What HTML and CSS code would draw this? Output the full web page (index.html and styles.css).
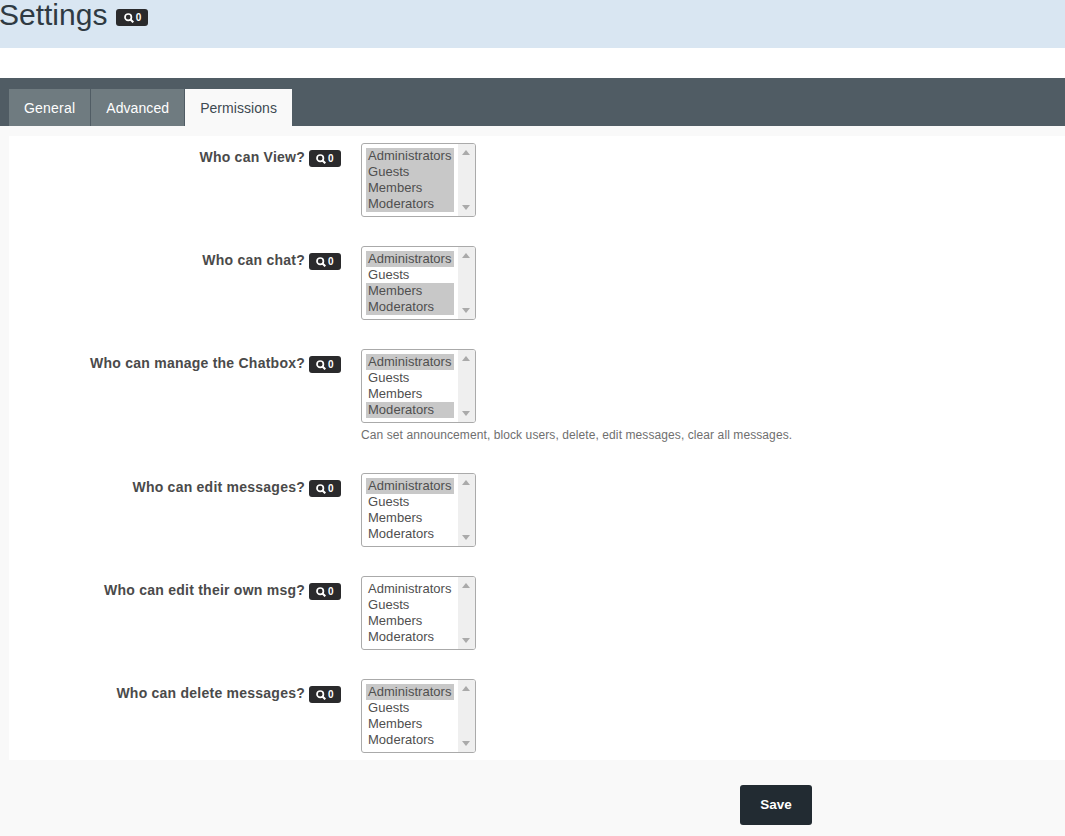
FILE: index.html
```html
<!DOCTYPE html>
<html lang="en">
<head>
<meta charset="utf-8">
<title>Settings</title>
<link rel="stylesheet" href="styles.css">
</head>
<body>
<svg class="defs" width="0" height="0" aria-hidden="true"><symbol id="mag" viewBox="0 0 10 10"><circle cx="4.2" cy="4.2" r="3.2" fill="none" stroke="currentColor" stroke-width="1.7"/><path d="M6.5 6.5 9.3 9.3" stroke="currentColor" stroke-width="2.1" fill="none"/></symbol></svg>
<header class="page-head">
  <h1 class="title">Settings</h1>
  <span class="badge badge-head"><svg class="mag"><use href="#mag"/></svg>0</span>
</header>
<nav class="tabbar">
  <a class="tab">General</a>
  <a class="tab tab-tight">Advanced</a>
  <a class="tab active">Permissions</a>
</nav>
<main class="content">
  <section class="panel">
    <div class="row">
      <div class="label"><span>Who can View?</span><span class="badge"><svg class="mag"><use href="#mag"/></svg>0</span></div>
      <div class="field"><div class="list"><ul class="opts"><li class="sel">Administrators</li><li class="sel">Guests</li><li class="sel">Members</li><li class="sel">Moderators</li></ul><div class="sb"><i class="up"></i><i class="down"></i></div></div></div>
    </div>
    <div class="row">
      <div class="label"><span>Who can chat?</span><span class="badge"><svg class="mag"><use href="#mag"/></svg>0</span></div>
      <div class="field"><div class="list"><ul class="opts"><li class="sel">Administrators</li><li>Guests</li><li class="sel">Members</li><li class="sel">Moderators</li></ul><div class="sb"><i class="up"></i><i class="down"></i></div></div></div>
    </div>
    <div class="row">
      <div class="label"><span>Who can manage the Chatbox?</span><span class="badge"><svg class="mag"><use href="#mag"/></svg>0</span></div>
      <div class="field"><div class="list"><ul class="opts"><li class="sel">Administrators</li><li>Guests</li><li>Members</li><li class="sel">Moderators</li></ul><div class="sb"><i class="up"></i><i class="down"></i></div></div>
      <p class="help">Can set announcement, block users, delete, edit messages, clear all messages.</p></div>
    </div>
    <div class="row">
      <div class="label"><span>Who can edit messages?</span><span class="badge"><svg class="mag"><use href="#mag"/></svg>0</span></div>
      <div class="field"><div class="list"><ul class="opts"><li class="sel">Administrators</li><li>Guests</li><li>Members</li><li>Moderators</li></ul><div class="sb"><i class="up"></i><i class="down"></i></div></div></div>
    </div>
    <div class="row">
      <div class="label"><span>Who can edit their own msg?</span><span class="badge"><svg class="mag"><use href="#mag"/></svg>0</span></div>
      <div class="field"><div class="list"><ul class="opts"><li>Administrators</li><li>Guests</li><li>Members</li><li>Moderators</li></ul><div class="sb"><i class="up"></i><i class="down"></i></div></div></div>
    </div>
    <div class="row">
      <div class="label"><span>Who can delete messages?</span><span class="badge"><svg class="mag"><use href="#mag"/></svg>0</span></div>
      <div class="field"><div class="list"><ul class="opts"><li class="sel">Administrators</li><li>Guests</li><li>Members</li><li>Moderators</li></ul><div class="sb"><i class="up"></i><i class="down"></i></div></div></div>
    </div>
  </section>
  <div class="actions"><button class="save" type="button">Save</button></div>
</main>
</body>
</html>
```
FILE: styles.css
```css
* { box-sizing: border-box; }
html, body { margin: 0; padding: 0; }
body { width: 1065px; height: 836px; overflow: hidden; background: #f9f9f9; font-family: "Liberation Sans", Arial, sans-serif; color: #4a4a4a; }
.defs { display: block; height: 0; }
.page-head { height: 48px; background: #d9e6f2; display: flex; align-items: flex-start; }
.title { margin: 0 0 0 -1px; font-size: 30px; font-weight: 400; line-height: 30px; color: #2f3a42; }
.badge { display: inline-flex; align-items: center; justify-content: center; gap: 2px; width: 32px; height: 17px; border-radius: 3px; background: #2a2a2c; color: #fff; font-size: 10px; font-weight: 700; line-height: 1; }
.badge-head { margin: 9px 0 0 9px; }
.mag { width: 10px; height: 10px; }
.tabbar { border-top: 30px solid #fff; height: 78px; background: #505c64; display: flex; align-items: flex-end; gap: 1px; padding-left: 9px; }
.tab { height: 37px; padding: 0 15px; display: flex; align-items: center; background: #6f7b80; color: #fff; font-size: 14px; letter-spacing: .2px; }
.tab-tight { letter-spacing: .08px; }
.tab.active { background: #f9f9f9; color: #3e4a52; letter-spacing: .05px; }
.content { padding-top: 10px; }
.panel { margin-left: 9px; background: #fff; padding: 7px 0 7px; display: flex; flex-direction: column; gap: 29px; }
.row { display: flex; align-items: flex-start; }
.label { width: 332px; display: flex; justify-content: flex-end; align-items: flex-start; gap: 4px; padding-top: 7px; font-size: 14px; font-weight: 700; letter-spacing: .24px; color: #4a4a4a; }
.label > span:first-child { line-height: 15px; }
.field { margin-left: 20px; }
.list { width: 115px; height: 74px; border: 1px solid #aaa; border-radius: 3px; background: #fff; display: flex; overflow: hidden; }
.opts { list-style: none; margin: 0; padding: 4px 0 0 4px; width: 96px; flex: none; font-size: 13px; letter-spacing: .03px; line-height: 15px; color: #4f4f4f; }
.opts li { width: 88px; height: 16px; padding-left: 2px; white-space: nowrap; }
.opts li.sel { background: #c8c8c8; }
.sb { position: relative; flex: 1; background: #efefef; }
.sb i { position: absolute; left: 4px; width: 0; height: 0; border-left: 4px solid transparent; border-right: 4px solid transparent; }
.up { top: 6px; border-bottom: 5px solid #aaa; }
.down { bottom: 6px; border-top: 5px solid #aaa; }
.help { margin: 5px 0 0; font-size: 12px; line-height: 14px; color: #6f6f6f; white-space: nowrap; height: 16px; letter-spacing: .09px; }
.actions { padding: 25px 0 0 740px; }
.save { display: block; width: 72px; height: 40px; padding: 0 0 1px; border: 0; border-radius: 3px; background: #222b32; color: #fff; font: 700 13.5px "Liberation Sans", Arial, sans-serif; }
```
